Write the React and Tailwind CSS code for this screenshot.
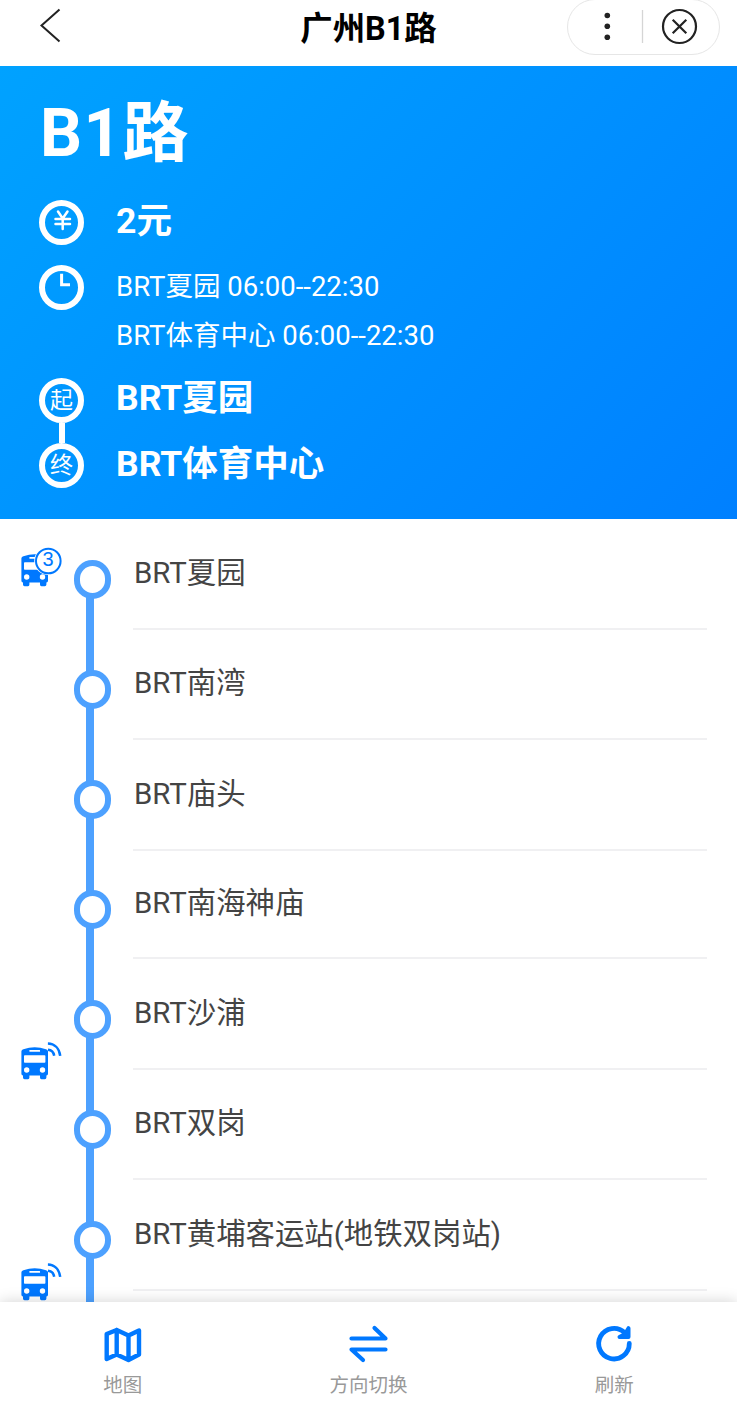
import React from "react";

const stops = [
  { name: "BRT夏园", height: "h-[111px]" },
  { name: "BRT南湾", height: "h-[110px]" },
  { name: "BRT庙头", height: "h-[111px]" },
  { name: "BRT南海神庙", height: "h-[108px]" },
  { name: "BRT沙浦", height: "h-[111px]" },
  { name: "BRT双岗", height: "h-[110px]" },
  { name: "BRT黄埔客运站(地铁双岗站)", height: "h-[111px]" },
];

function Bus({ count }) {
  return (
    <svg className="block h-[38px] w-[41px] overflow-visible" viewBox="0 0 41 38" fill="none">
      <path
        fill="#0078ff"
        fillRule="evenodd"
        d="M.4 9.2Q.5 7.7 2.4 7.2Q8 5.3 13.7 5.3T25 7.2Q26.9 7.7 27 9.2V31.8Q27 33.5 25.4 33.5V35.6Q25.4 37.2 23.8 37.2H20.4Q19 37.2 19 35.6V33.5H8.4V35.6Q8.4 37.2 7 37.2H3.6Q2 37.2 2 35.6V33.5Q.4 33.5.4 31.8ZM8.8 8Q8.3 8 8.3 8.8T8.8 9.8H18.6Q19.1 9.8 19.1 8.9T18.6 8ZM3.8 13.2Q3 13.2 3 14V20Q3 20.8 3.8 20.8H23.6Q24.4 20.8 24.4 20V14Q24.4 13.2 23.6 13.2ZM5.7 25.3A2.7 2.7 0 1 0 5.7 30.7A2.7 2.7 0 1 0 5.7 25.3ZM21.5 25.3A2.7 2.7 0 1 0 21.5 30.7A2.7 2.7 0 1 0 21.5 25.3Z"
      />
      {count ? (
        <>
          <circle cx="27.3" cy="12" r="14.1" fill="#fff" />
          <circle cx="27.3" cy="12" r="12.3" fill="#fff" stroke="#0078ff" strokeWidth="2" />
          <text x="27" y="17" textAnchor="middle" fontSize="20" fill="#0078ff" fontFamily="Liberation Sans, sans-serif">
            {count}
          </text>
        </>
      ) : (
        <path d="M26.9 1.6C33.5 1.8 38.2 6.4 39.2 13.8M27 7.8C30.3 8 32.6 10.2 33.2 13.8" stroke="#0078ff" strokeWidth="2.5" />
      )}
    </svg>
  );
}

function Ring({ children }) {
  return (
    <div className="flex size-[45px] shrink-0 items-center justify-center rounded-full border-[6px] border-white text-[23px] leading-none">
      {children}
    </div>
  );
}

function Tab({ label, children }) {
  return (
    <button className="flex flex-1 flex-col items-center pt-[22px] text-[19.5px] leading-[28px] text-[#999]">
      <svg className="mb-[8px] size-[40px] overflow-visible" viewBox="0 0 40 40" fill="none" stroke="#0078ff" strokeLinecap="round" strokeLinejoin="round">
        {children}
      </svg>
      {label}
    </button>
  );
}

export default function App() {
  return (
    <div className="flex h-[1413px] w-[737px] flex-col overflow-hidden bg-white font-[Roboto,'Noto_Sans_CJK_SC',sans-serif]">
      <header className="grid h-[66px] shrink-0 grid-cols-3 items-start">
        <svg className="mt-[8px] ml-[39px] h-[36px] w-[24px]" viewBox="0 0 24 36" fill="none" stroke="#222" strokeWidth="2">
          <path d="M20.5 1.5L2.5 17.5L20.5 33.5" />
        </svg>
        <h1 className="mt-[6px] text-center text-[32.4px] leading-[46px] font-bold text-black">广州B1路</h1>
        <div className="-mt-px mr-[17px] flex h-[56px] w-[153px] justify-self-end rounded-full border-[1.5px] border-[#e6e6e6]">
          <svg className="size-full" viewBox="0 0 151 54" fill="none" stroke="#222">
            <g fill="#222" stroke="none">
              <circle cx="39.3" cy="15.5" r="2.8" />
              <circle cx="39.3" cy="26.3" r="2.8" />
              <circle cx="39.3" cy="37.3" r="2.8" />
            </g>
            <path d="M74.5 10V43" stroke="#d5d5d5" strokeWidth="1.3" />
            <circle cx="111.5" cy="26.5" r="16.5" strokeWidth="2.2" />
            <path d="M104.7 19.7L118.3 33.3M118.3 19.7L104.7 33.3" strokeWidth="2.2" />
          </svg>
        </div>
      </header>

      <section className="flex h-[453px] shrink-0 flex-col bg-[linear-gradient(135deg,#00a2ff,#0080ff)] pl-[39px] text-white">
        <h2 className="mt-[20px] h-[94px] pl-px text-[66px] leading-[96px] font-bold">
          <span className="tracking-[1.3px]">B1</span>路
        </h2>
        <div className="mt-[20px] flex gap-[32px]">
          <Ring>
            <svg className="mb-[5px] size-[24px]" viewBox="0 0 24 24" fill="none" stroke="#fff" strokeWidth="2.5" strokeLinecap="round">
              <path d="M8 3.5L12.7 10.5L17.5 3.5M5.5 11H20M5.5 16H20M12.7 10.5V21" />
            </svg>
          </Ring>
          <p className="text-[35.6px] leading-[42px] font-bold">2元</p>
        </div>
        <div className="mt-[20px] flex gap-[32px]">
          <Ring>
            <svg className="size-[33px]" viewBox="0 0 33 33" fill="none" stroke="#fff" strokeWidth="3">
              <path d="M16.6 2.8V13.7H25" />
            </svg>
          </Ring>
          <div className="-mt-[3px] text-[27.5px] leading-[49px]">
            <p>BRT夏园 06:00--22:30</p>
            <p>BRT体育中心 06:00--22:30</p>
          </div>
        </div>
        <div className="mt-[18px] flex gap-[32px]">
          <div className="flex flex-col items-center">
            <Ring>起</Ring>
            <div className="h-[20px] w-[6px] bg-white" />
            <Ring>终</Ring>
          </div>
          <div className="-mt-[13px] text-[35.5px] leading-[66px] font-bold">
            <p>BRT夏园</p>
            <p>BRT体育中心</p>
          </div>
        </div>
      </section>

      <main className="flex h-[783px] shrink-0 overflow-hidden">
        <div className="flex w-[73px] shrink-0 flex-col pt-[30px] pl-[21px]">
          <Bus count={3} />
          <div className="mt-[455px]">
            <Bus />
          </div>
          <div className="mt-[183px]">
            <Bus />
          </div>
        </div>
        <div className="w-[38px] shrink-0 pt-[41px]">
          {stops.map((s) => (
            <div key={s.name} className="flex h-[110.1px] flex-col">
              <div className="ml-[0.5px] h-[38.5px] w-[37px] shrink-0 rounded-full border-[6px] border-[#4da1ff]" />
              <div className="-my-[2px] ml-[13px] w-[8px] grow bg-[#4da1ff]" />
            </div>
          ))}
        </div>
        <ul className="ml-[22px] w-[574px] shrink-0 text-[29.4px] leading-[42px] text-[#444]">
          {stops.map((s) => (
            <li key={s.name} className={`${s.height} flex items-center border-b-2 border-[#f0f0f2] pb-[2px] pl-px`}>
              {s.name}
            </li>
          ))}
        </ul>
      </main>

      <nav className="relative flex h-[111px] shrink-0 bg-white shadow-[0_0_14px_rgba(0,0,0,0.18)]">
        <Tab label="地图">
          <path strokeWidth="4.4" d="M3.7 10L13.7 6L25.5 11.5L36 6.5V30.5L25.5 36L13.7 30.5L3.7 35ZM13.7 6V30.5M25.5 11.5V36" />
        </Tab>
        <Tab label="方向切换">
          <path strokeWidth="4.2" d="M2.5 14.5H36.5L25.5 4M36.5 25.5H2.5L14 36" />
        </Tab>
        <Tab label="刷新">
          <path strokeWidth="4.8" d="M35.3 19.5A15.3 15.3 0 1 1 30.5 8.5" />
          <path strokeWidth="4" fill="#0078ff" d="M34.5 4.2V13H25.5L31 10Z" />
        </Tab>
      </nav>
    </div>
  );
}
